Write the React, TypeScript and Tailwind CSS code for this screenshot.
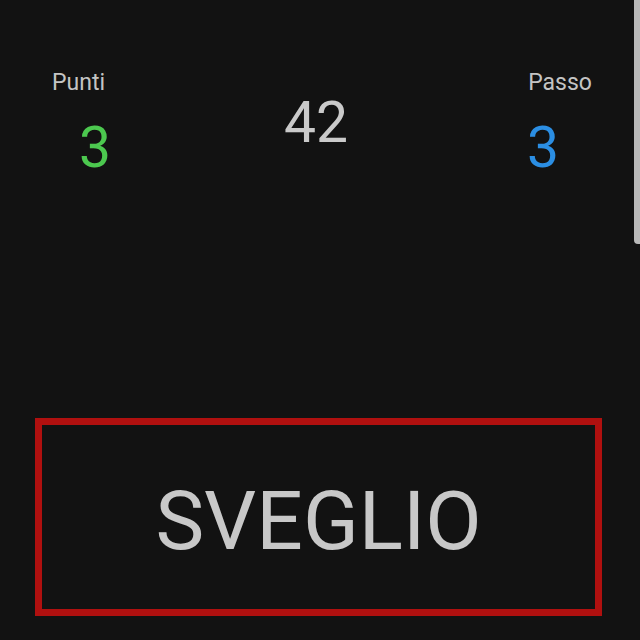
import React from 'react';

const font = { fontFamily: 'Roboto, "Noto Sans", sans-serif' };

export default function App() {
  return (
    <div className="relative w-[640px] h-[640px] bg-[#121212] overflow-hidden" style={font}>
      {/* scrollbar thumb */}
      <div className="absolute right-0 top-0 w-[6px] h-[244px] bg-[#b9b9b9] rounded-bl-[4px]" />

      <div className="flex flex-col h-full">
        {/* score row */}
        <div className="flex items-start justify-between pt-[71px]">
          <div className="ml-[52px] w-[86px] flex flex-col">
            <span className="text-[23px] leading-none text-[#c4c4c4]">Punti</span>
            <span className="mt-[25px] text-center text-[57px] leading-none text-[#4cc84f]">3</span>
          </div>
          <div className="pt-[23px] text-[57px] leading-none text-[#cacaca]">42</div>
          <div className="mr-[48px] w-[98px] flex flex-col">
            <span className="text-right text-[23px] leading-none text-[#c4c4c4]">Passo</span>
            <span className="mt-[25px] text-center text-[57px] leading-none text-[#2b8ee3]">3</span>
          </div>
        </div>

        {/* wake button */}
        <div className="mt-auto mb-[24px] mx-[35px] w-[567px] h-[198px] border-[7px] border-[#b0100f] flex items-center justify-center">
          <span className="text-[82px] leading-none text-[#c8c8c8] pt-[8px]">SVEGLIO</span>
        </div>
      </div>
    </div>
  );
}
